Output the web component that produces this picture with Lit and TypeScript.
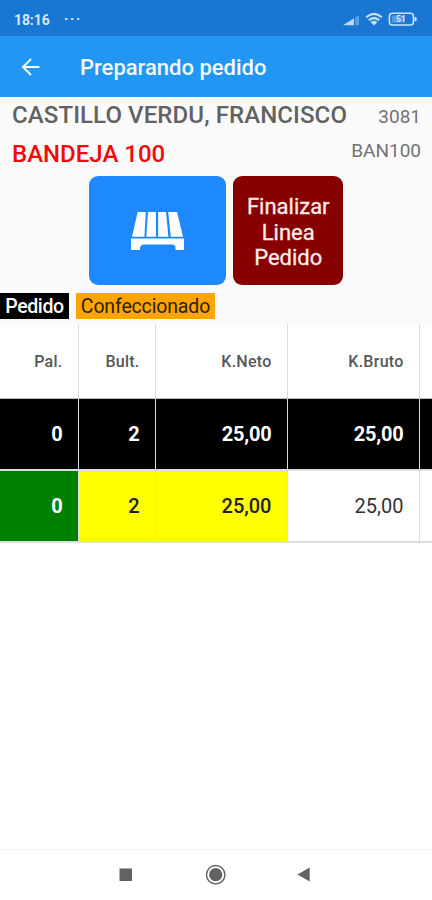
import { LitElement, html, css, svg } from "lit";
import { customElement } from "lit/decorators.js";

interface Cell { text: string; tone: string; }

const HEADERS = ["Pal.", "Bult.", "K.Neto", "K.Bruto", ""];

const ROWS: Cell[][] = [
  [
    { text: "0", tone: "black" },
    { text: "2", tone: "black" },
    { text: "25,00", tone: "black" },
    { text: "25,00", tone: "black" },
    { text: "", tone: "black" },
  ],
  [
    { text: "0", tone: "green" },
    { text: "2", tone: "yellow" },
    { text: "25,00", tone: "yellow" },
    { text: "25,00", tone: "plain" },
    { text: "", tone: "plain" },
  ],
];

@customElement("status-bar")
class StatusBar extends LitElement {
  static styles = css`
    :host { display: flex; align-items: center; height: 36px; padding: 0 15px 0 14px; background: #1976d2; color: #d6eafc; box-sizing: border-box; }
    .time { font-size: 14px; line-height: 16px; font-weight: 700; margin-top: 4px; width: 51px; letter-spacing: -0.1px; }
    .dots { margin-top: 2px; }
    .icons { margin-left: auto; margin-top: 2px; }
    svg { display: block; }
    .pct { font: 700 8.5px Roboto, sans-serif; }
  `;
  render() {
    return html`
      <span class="time">18:16</span>
      <svg class="dots" width="16" height="4" fill="#c3e0fb">
        <rect x="0" y="1" width="2.4" height="2" /><rect x="6" y="1" width="2.4" height="2" /><rect x="12" y="1" width="2.4" height="2" />
      </svg>
      <svg class="icons" width="75" height="16" viewBox="342 11 75 16">
        <path d="M343 25.2 L354 18.2 V25.2Z" fill="#b9d9f5" />
        <path d="M355.2 17.4 L359 15 V25.2 H355.2Z" fill="#5b9fe0" />
        <g fill="none" stroke="#c9e3fa" stroke-width="2">
          <path d="M366.2 17.2 Q374 10.6 381.8 17.2" />
          <path d="M368.8 20.2 Q374 16 379.2 20.2" />
        </g>
        <path d="M370.6 21.9 Q374 19.4 377.4 21.9 L374 25.4Z" fill="#c9e3fa" />
        <rect x="389.4" y="13.2" width="24" height="11.8" rx="3" fill="none" stroke="#c9e3fa" stroke-width="1.6" />
        <rect x="391.8" y="15.6" width="12" height="7" fill="#83b9ea" opacity=".55" />
        <path d="M414.4 17 h1 q1.2 0 1.2 1.2 v1.8 q0 1.2 -1.2 1.2 h-1z" fill="#c9e3fa" />
        <text class="pct" x="401" y="22.3" text-anchor="middle" fill="#d9ecfd">51</text>
      </svg>
    `;
  }
}

@customElement("orders-table")
class OrdersTable extends LitElement {
  static styles = css`
    :host { display: block; overflow: hidden; background: #fff; }
    .row { display: grid; grid-template-columns: 79px 77px 132px 132px 12px; box-sizing: border-box; border-bottom: 2px solid #dcdee2; height: 72px; }
    .row.head { height: 74.5px; border-bottom: 1px solid #b8b8b8; }
    .cell { display: flex; align-items: center; justify-content: flex-end; box-sizing: border-box; padding-right: 15.5px; border-right: 1.5px solid #dcdde0; font-size: 20px; font-weight: 700; letter-spacing: -0.2px; padding-top: 1px; }
    .cell:last-child { border-right: 0; padding: 0; }
    .head .cell { font-size: 16px; font-weight: 500; color: #55575a; letter-spacing: 0.25px; }
    .black { background: #000; color: #fff; }
    .green { background: #008000; color: #fff; }
    .yellow { background: #ff0; color: #222; font-weight: 500; letter-spacing: 0; }
    .plain { background: #fff; color: #333; font-weight: 400; letter-spacing: 0; }
  `;
  render() {
    return html`
      <div class="row head">${HEADERS.map((h) => html`<div class="cell">${h}</div>`)}</div>
      ${ROWS.map((r) => html`
        <div class="row">
          ${r.map((c) => html`<div class="cell ${c.tone}">${c.text}</div>`)}
        </div>`)}
    `;
  }
}

const palletIcon = svg`
  <path d="M6.7 0 H14.8 L13.4 24.8 H1Z" />
  <path d="M17 0 H25 V24.8 H15.3Z" />
  <path d="M27.2 0 H35 L37.4 24.8 H27.2Z" />
  <path d="M37.2 0 H46 L52 24.8 H39.8Z" />
  <path d="M0 26.6 H53 V38 H44.5 V36 Q44.5 32.5 41 32.5 H13 Q9.5 32.5 9 36 V38 H0Z" />
`;

@customElement("app-root")
class AppRoot extends LitElement {
  static styles = css`
    :host { display: flex; flex-direction: column; width: 432px; height: 900px; overflow: hidden; background: #fff; font-family: Roboto, sans-serif; }
    svg { display: block; }
    .bar { display: flex; align-items: center; height: 61px; background: #2196f3; color: #f4faff; padding-left: 21px; flex: none; }
    .bar h1 { margin: 3px 0 0 40px; font-size: 22px; line-height: 26px; font-weight: 500; white-space: nowrap; }
    .info { background: #fafafa; height: 227px; box-sizing: border-box; padding-top: 3px; flex: none; }
    .line { display: flex; justify-content: space-between; padding: 0 11px 0 12px; white-space: nowrap; }
    .client { height: 39px; }
    .item { height: 37px; }
    .name { font-size: 24px; line-height: 31px; font-weight: 500; color: #626262; letter-spacing: 0.1px; }
    .product { font-size: 24px; line-height: 31px; font-weight: 500; color: #f40808; }
    .code { font-size: 19px; line-height: 34px; color: #737373; }
    .item .code { line-height: 24px; }
    .actions { display: flex; justify-content: center; gap: 7px; height: 109px; }
    .btn { border-radius: 9px; display: flex; align-items: center; justify-content: center; text-align: center; }
    .pallet { width: 137.5px; background: #1e88ff; }
    .finish { width: 110px; background: #870000; color: #ffebe8; font-size: 22px; line-height: 25.5px; padding-top: 4px; box-sizing: border-box; -webkit-text-stroke: 0.3px #ffebe8; }
    .tags { display: flex; gap: 7px; margin-top: 8px; font-size: 19.5px; line-height: 26px; }
    .tag { height: 26px; text-align: center; white-space: nowrap; padding-top: 1px; box-sizing: border-box; }
    .ordered { width: 69px; background: #000; color: #fff; font-weight: 500; letter-spacing: -0.4px; }
    .made { width: 139px; background: #ffa500; color: #302000; letter-spacing: -0.15px; }
    .space { flex: 1; }
    .nav { height: 51px; border-top: 1px solid #f3f3f3; box-sizing: border-box; display: flex; justify-content: center; }
  `;
  render() {
    return html`
      <status-bar></status-bar>
      <header class="bar">
        <svg width="19" height="18" viewBox="0 0 19 18" fill="none" stroke="#f4faff" stroke-width="2"><path d="M18.4 9 H2 M10 1 L2 9 L10 17" /></svg>
        <h1>Preparando pedido</h1>
      </header>
      <section class="info">
        <div class="line client"><span class="name">CASTILLO VERDU, FRANCISCO</span><span class="code">3081</span></div>
        <div class="line item"><span class="product">BANDEJA 100</span><span class="code">BAN100</span></div>
        <div class="actions">
          <div class="btn pallet"><svg width="53" height="38" viewBox="0 0 53 38" fill="#fff">${palletIcon}</svg></div>
          <div class="btn finish">Finalizar<br />Linea<br />Pedido</div>
        </div>
        <div class="tags"><span class="tag ordered">Pedido</span><span class="tag made">Confeccionado</span></div>
      </section>
      <orders-table></orders-table>
      <div class="space"></div>
      <nav class="nav">
        <svg width="216" height="50" viewBox="108 850 216 50" fill="#626262">
          <rect x="119.5" y="868.5" width="12.5" height="12.5" />
          <circle cx="215.7" cy="874.7" r="6.6" />
          <circle cx="215.7" cy="874.7" r="9.2" fill="none" stroke="#626262" stroke-width="1.4" />
          <path d="M297.5 874.5 L309.7 867.5 V881.5Z" />
        </svg>
      </nav>
    `;
  }
}
